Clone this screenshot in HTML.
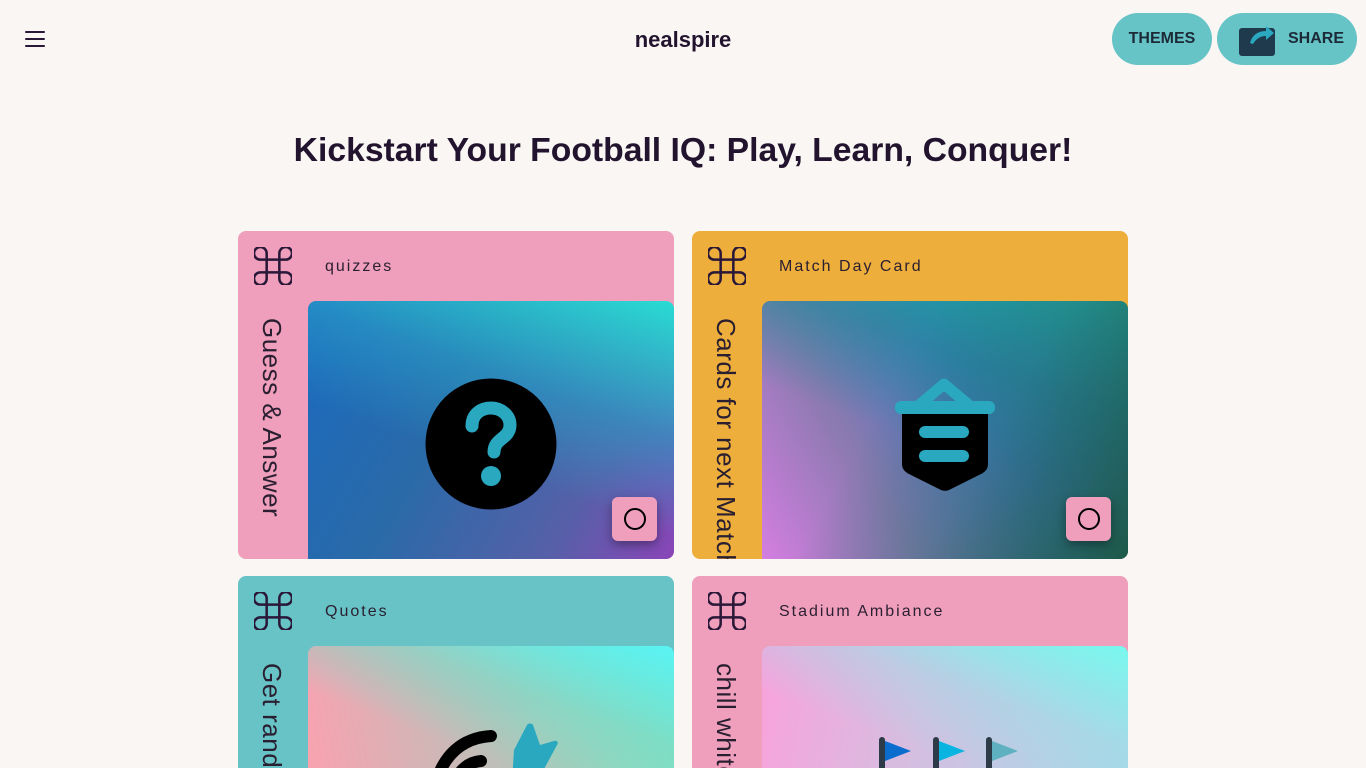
<!DOCTYPE html>
<html style="height:768px;overflow:hidden"><head><meta charset="utf-8"><style>
*{margin:0;padding:0;box-sizing:border-box}
body{width:1366px;height:768px;overflow:hidden;background:#faf6f3;font-family:"Liberation Sans",sans-serif;color:#22142e;position:relative}
.menu{position:absolute;left:25px;top:31px;width:20px}
.menu i{display:block;height:2px;background:#2a1838;margin-bottom:5px;border-radius:1px}
.brand{position:absolute;left:0;right:0;top:27px;text-align:center;font-size:22px;font-weight:bold;color:#22142e}
.btn{position:absolute;top:13px;height:52px;border-radius:26px;background:#66c3c6;font-weight:bold;font-size:16px;color:#1c2a38;display:flex;align-items:center;justify-content:center}
h1{position:absolute;left:0;right:0;top:131px;text-align:center;font-size:33.7px;font-weight:bold;color:#22142e}
.card{position:absolute;width:436px;height:328px;border-radius:8px;overflow:hidden}
.card.b{height:192px;border-radius:8px 8px 0 0}
.cmd{position:absolute;left:16px;top:16px}
.lab{position:absolute;left:87px;top:27px;font-size:16px;letter-spacing:2px;color:#2a1f30}
.vt{position:absolute;left:18px;top:87px;writing-mode:vertical-rl;font-size:26px;color:#2a1f30;white-space:nowrap;letter-spacing:.5px}
.img{position:absolute;left:70px;top:70px;right:0;bottom:0;border-radius:8px 8px 0 0;overflow:hidden}
.fab{position:absolute;right:17px;bottom:18px;width:45px;height:44px;border-radius:6px;background:#ef9fbc;box-shadow:0 4px 10px rgba(0,0,0,.35);display:flex;align-items:center;justify-content:center}
.fab span{width:22px;height:22px;border:2px solid #000;border-radius:50%}
</style></head><body>
<div class="menu"><i></i><i></i><i></i></div>
<div class="brand">nealspire</div>
<div class="btn" style="left:1112px;width:100px">THEMES</div>
<div class="btn" style="left:1217px;width:140px;justify-content:flex-start;padding-left:21px">
<svg width="38" height="36" viewBox="0 0 38 36"><rect x="1" y="7" width="36" height="28" rx="3" fill="#1e3a4c"/><path d="M12 22c2-8 8-12 16-12V5l8 7-8 7v-4c-6 0-10 3-13 8z" fill="#2aa8bf"/></svg>
<span style="margin-left:12px">SHARE</span></div>
<h1>Kickstart Your Football IQ: Play, Learn, Conquer!</h1>

<svg width="0" height="0" style="position:absolute"><defs><symbol id="c" viewBox="3 3 18 18"><path d="M15 6v12a3 3 0 1 0 3-3H6a3 3 0 1 0 3 3V6a3 3 0 1 0-3 3h12a3 3 0 1 0-3-3" fill="none" stroke="#2a1838" stroke-width="1.2"/></symbol></defs></svg>

<div class="card" style="left:238px;top:231px;background:#ef9fbc">
<svg class="cmd" width="38" height="38"><use href="#c"/></svg>
<div class="lab">quizzes</div>
<div class="vt">Guess &amp; Answer</div>
<div class="img" style="background:linear-gradient(200deg,#29dcd3 0%,rgba(41,160,200,.6) 35%,rgba(0,0,0,0) 60%),linear-gradient(120deg,#1a6ac0 0%,#2a6aa8 40%,#5660a8 75%,#8a45b8 100%)">
<svg style="position:absolute;left:117px;top:77px" width="132" height="132" viewBox="0 0 132 132"><circle cx="66" cy="66" r="65.5" fill="#000"/><path d="M47 48c0-12 9-18 19-18s19 7 19 17c0 14-16 13-16 27" fill="none" stroke="#2aa8bf" stroke-width="13" stroke-linecap="round"/><circle cx="66" cy="98" r="10" fill="#2aa8bf"/></svg>
<div class="fab"><span></span></div></div>
</div>

<div class="card" style="left:692px;top:231px;background:#edae3c">
<svg class="cmd" width="38" height="38"><use href="#c"/></svg>
<div class="lab">Match Day Card</div>
<div class="vt">Cards for next Match</div>
<div class="img" style="background:linear-gradient(200deg,#1ea9a0 0%,rgba(30,140,150,.6) 30%,rgba(0,0,0,0) 55%),linear-gradient(60deg,#d47ee0 0%,#8a7ab0 30%,#3e74c0 60%,#1a68c0 100%)">
<div style="position:absolute;inset:0;background:linear-gradient(300deg,#1e5a48 0%,rgba(40,110,110,.4) 40%,rgba(0,0,0,0) 65%)"></div>
<svg style="position:absolute;left:132px;top:74px" width="102" height="127" viewBox="0 0 102 127"><path d="M8 36h86v53c0 5-3 8-7 10l-32 16c-3 1-5 1-8 0L15 99c-4-2-7-5-7-10z" fill="#000"/><path d="M24 31l26-22 26 22" fill="none" stroke="#2aa8bf" stroke-width="11" stroke-linejoin="round"/><rect x="1" y="26" width="100" height="13" rx="6" fill="#2aa8bf"/><rect x="25" y="51" width="50" height="12" rx="6" fill="#2aa8bf"/><rect x="25" y="75" width="50" height="12" rx="6" fill="#2aa8bf"/></svg>
<div class="fab"><span></span></div></div>
</div>

<div class="card b" style="left:238px;top:576px;background:#67c3c6">
<svg class="cmd" width="38" height="38"><use href="#c"/></svg>
<div class="lab">Quotes</div>
<div class="vt">Get random quotes</div>
<div class="img" style="background:linear-gradient(200deg,#58f4f4 0%,rgba(120,220,200,.6) 40%,rgba(0,0,0,0) 70%),linear-gradient(80deg,#f9a2b0 0%,#bcc0b8 50%,#7ee4c0 100%)">
<svg style="position:absolute;left:118px;top:76px" width="140" height="60" viewBox="0 0 140 60"><path d="M10 60c8-26 25-44 55-46M28 60c6-12 14-20 27-21" fill="none" stroke="#000" stroke-width="12" stroke-linecap="round"/><path d="M88 28l13-25c1-2 5-2 6 0l7 20 14-4c3-1 5 2 3 4l-20 37H86z" fill="#2aa8bf"/></svg>
</div>
</div>

<div class="card b" style="left:692px;top:576px;background:#ef9fbc">
<svg class="cmd" width="38" height="38"><use href="#c"/></svg>
<div class="lab">Stadium Ambiance</div>
<div class="vt">chill white noise</div>
<div class="img" style="background:linear-gradient(200deg,#78f8ee 0%,rgba(160,220,230,.5) 40%,rgba(0,0,0,0) 70%),linear-gradient(100deg,#f9a2dc 0%,#d8bce0 40%,#a8d8e8 100%)">
<svg style="position:absolute;left:115px;top:88px" width="145" height="34" viewBox="0 0 145 34"><g fill="#2d3a48"><rect x="2" y="3" width="6" height="40" rx="3"/><rect x="56" y="3" width="6" height="40" rx="3"/><rect x="109" y="3" width="6" height="40" rx="3"/></g><path d="M8 7l26 10-26 10z" fill="#0a6ccc"/><path d="M62 7l26 10-26 10z" fill="#09b4e0"/><path d="M115 7l26 10-26 10z" fill="#5fb0c0"/></svg>
</div>
</div>
</body></html>
